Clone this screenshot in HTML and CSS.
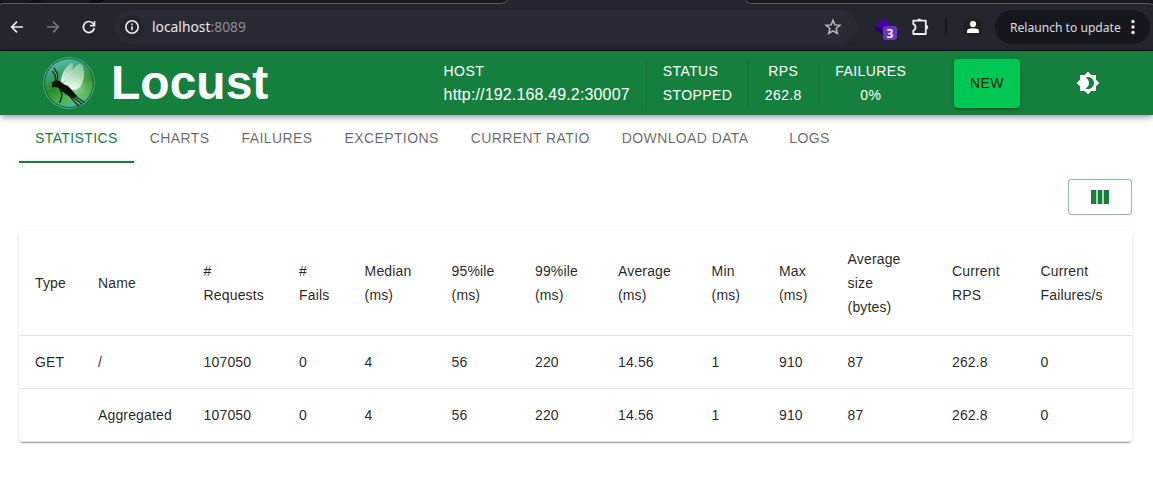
FILE: index.html
```html
<!DOCTYPE html>
<html lang="en">
<head>
<meta charset="utf-8">
<title>Locust</title>
<link rel="stylesheet" href="styles.css">
</head>
<body>
<div class="browser">
  <div class="tabstrip">
    <svg class="tabstrip-art" width="1153" height="5" viewBox="0 0 1153 5">
      <path d="M0 0H508Q505 3.5 500 3.5H0z" fill="#17181d"/>
      <path d="M745 0H1153V3.5H753Q748 3.5 745 0z" fill="#17181d"/>
      <path d="M27 3L34 0H43L40 3zM88 3L91 0H104L101 3z" fill="#0d0e11"/>
      <path d="M0 5Q1 3.5 4 3.5H500Q506 3.5 508 0M745.500 0Q747 3.500 753 3.500H1147Q1151 3.500 1153 5" fill="none" stroke="#5a5b5e"/>
    </svg>
  </div>
  <div class="toolbar">
    <svg class="nav-icon back" width="16" height="16" viewBox="0 0 16 16"><path d="M14 8H3M8 2.700L2.700 8L8 13.300" fill="none" stroke="#eeeeef" stroke-width="1.700"/></svg>
    <svg class="nav-icon forward" width="16" height="16" viewBox="0 0 16 16"><path d="M2 8H13M8 2.700L13.300 8L8 13.300" fill="none" stroke="#77787c" stroke-width="1.700"/></svg>
    <svg class="nav-icon reload" width="16" height="16" viewBox="0 0 16 16"><path d="M13.300 9A5.500 5.500 0 1 1 12.300 4.700L13.500 6" fill="none" stroke="#eeeeef" stroke-width="1.700"/><path d="M13.500 2V6.600H9" fill="none" stroke="#eeeeef" stroke-width="1.600"/></svg>
    <div class="omnibox">
      <span class="site-info"><svg width="16" height="16" viewBox="0 0 16 16"><circle cx="8" cy="8" r="6.200" fill="none" stroke="#eeeeef" stroke-width="1.600"/><path d="M8 7.200V11.200M8 4.500V6" stroke="#eeeeef" stroke-width="1.600"/></svg></span>
      <span class="url">localhost<span class="port">:8089</span></span>
      <svg class="star" width="18" height="18" viewBox="0 0 18 18"><path d="M9 2.300L10.900 6.900L15.900 7.300L12.100 10.500L13.300 15.400L9 12.800L4.700 15.400L5.900 10.500L2.100 7.300L7.100 6.900z" fill="none" stroke="#b9babd" stroke-width="1.500"/></svg>
    </div>
    <div class="extension">
      <svg width="18" height="18" viewBox="0 0 18 18"><path d="M0.500 9V12L8.500 17L16 12V9z" fill="#21016e"/><path d="M8.500 1L16.500 6.500L8.500 12L0.500 6.500z" fill="#4600ad"/></svg>
      <span class="badge">3</span>
    </div>
    <svg class="puzzle" width="20" height="20" viewBox="0 0 20 20"><path d="M3.300 3.700H15.800V17H3.300V13.500Q5.500 12.800 5.500 10.300Q5.500 7.900 3.300 7.200z" fill="none" stroke="#eeeeef" stroke-width="1.800" stroke-linejoin="round"/><path d="M7.300 3.500a2.100 2.100 0 0 1 4.200 0zM16 8a2.200 2.200 0 0 1 0 4.400z" fill="#eeeeef"/></svg>
    <span class="separator"></span>
    <span class="profile"><svg width="14" height="14" viewBox="0 0 14 14"><circle cx="7" cy="4" r="3.100" fill="#fff"/><path d="M1 13V11Q1 8.200 7 8.200T13 11V13z" fill="#fff"/></svg></span>
    <div class="relaunch"><span>Relaunch to update</span><svg width="4" height="16" viewBox="0 0 4 16" fill="#eeeeef"><circle cx="2" cy="2.500" r="1.700"/><circle cx="2" cy="8" r="1.700"/><circle cx="2" cy="13.500" r="1.700"/></svg></div>
  </div>
</div>

<header class="appbar">
  <div class="brand">
    <svg width="52" height="52" viewBox="0 0 52 52">
      <defs>
        <linearGradient id="sky" x1="0.200" y1="0" x2="0.500" y2="1">
          <stop offset="0" stop-color="#58c6c0"/><stop offset="0.350" stop-color="#3b9c68"/><stop offset="0.600" stop-color="#278f25"/><stop offset="0.820" stop-color="#48b04c"/><stop offset="1" stop-color="#43bea8"/>
        </linearGradient>
        <radialGradient id="glow" cx="0.630" cy="0.590" r="0.420"><stop offset="0" stop-color="#b4e9a8" stop-opacity="0.900"/><stop offset="1" stop-color="#65ba57" stop-opacity="0"/></radialGradient>
        <linearGradient id="wing" x1="0.700" y1="0" x2="0.300" y2="1"><stop offset="0" stop-color="#b5e5c5" stop-opacity="0.600"/><stop offset="1" stop-color="#fff" stop-opacity="0.900"/></linearGradient>
      </defs>
      <circle cx="26" cy="26" r="25.300" fill="url(#sky)" stroke="#5fae86" stroke-width="1"/>
      <circle cx="26" cy="26" r="24.400" fill="url(#glow)" stroke="#124c38" stroke-width="0.900"/>
      <path d="M18 25C18 15 25 7 29 6C33 8 26 18 20 26z" fill="url(#wing)"/>
      <path d="M20 28C24 18 31 8 37 7C43 9 42 25 36 31C31 34 24 33 20 28z" fill="url(#wing)"/>
      <path d="M9 30.500L8.800 26L12 23.500L16.500 24L20 27L25 29L30 34.500L34.500 39.500L29.500 41L23 37.500L17.500 33L15 30.500L12 30z" fill="#071109"/>
      <path d="M13 24L12 18L9 14M14.500 24V17L11 11M16.500 31L19 37L18 42L16.500 46M24 36L30 43L36 49.500M27 38L39 47M30 38L41 45" fill="none" stroke="#0a2110" stroke-width="1.200"/>
    </svg>
    <h1>Locust</h1>
  </div>
  <div class="status">
    <div class="metric host"><span>HOST</span><span class="address">http://192.168.49.2:30007</span></div>
    <div class="metric state"><span>STATUS</span><span>STOPPED</span></div>
    <div class="metric rps"><span>RPS</span><span>262.8</span></div>
    <div class="metric fails"><span>FAILURES</span><span>0%</span></div>
  </div>
  <button class="new">NEW</button>
  <svg class="theme" width="24" height="24" viewBox="0 0 24 24"><path fill="#fff" d="M20 8.690V4h-4.690L12 .69 8.690 4H4v4.690L.69 12 4 15.310V20h4.690L12 23.310 15.310 20H20v-4.690L23.310 12 20 8.690zM12 18c-.89 0-1.740-.2-2.500-.55C11.560 16.500 13 14.420 13 12s-1.440-4.500-3.500-5.450C10.260 6.200 11.110 6 12 6c3.310 0 6 2.690 6 6s-2.690 6-6 6z"/></svg>
</header>

<main class="content">
  <nav class="tabs">
    <a class="tab active">STATISTICS</a><a class="tab">CHARTS</a><a class="tab">FAILURES</a><a class="tab">EXCEPTIONS</a><a class="tab">CURRENT RATIO</a><a class="tab">DOWNLOAD DATA</a><a class="tab">LOGS</a>
  </nav>
  <div class="actions">
    <button class="columns"><svg width="24" height="24" viewBox="0 0 24 24"><path fill="#15803d" d="M3 5h5.330v14H3zM9.670 5h4.660v14H9.670zM15.670 5H21v14h-5.330z"/></svg></button>
  </div>
  <div class="paper">
    <table>
      <colgroup><col class="c-type"><col class="c-name"><col class="c-req"><col class="c-fail"><col class="c-med"><col class="c-pct"><col class="c-pct"><col class="c-avg"><col class="c-min"><col class="c-max"><col class="c-size"><col class="c-rps"><col class="c-fps"></colgroup>
      <thead><tr><th>Type</th><th>Name</th><th class="snug">#<br>Requests</th><th>#<br>Fails</th><th class="snug">Median<br>(ms)</th><th class="snug">95%ile<br>(ms)</th><th>99%ile<br>(ms)</th><th>Average<br>(ms)</th><th class="snug">Min<br>(ms)</th><th>Max<br>(ms)</th><th class="snug">Average<br>size<br>(bytes)</th><th>Current<br>RPS</th><th class="loose">Current<br>Failures/s</th></tr></thead>
      <tbody>
        <tr><td>GET</td><td>/</td><td class="snug">107050</td><td>0</td><td class="snug">4</td><td class="snug">56</td><td>220</td><td>14.56</td><td class="snug">1</td><td>910</td><td class="snug">87</td><td>262.8</td><td class="loose">0</td></tr>
        <tr><td></td><td>Aggregated</td><td class="snug">107050</td><td>0</td><td class="snug">4</td><td class="snug">56</td><td>220</td><td>14.56</td><td class="snug">1</td><td>910</td><td class="snug">87</td><td>262.8</td><td class="loose">0</td></tr>
      </tbody>
    </table>
  </div>
</main>
</body>
</html>
```

FILE: styles.css
```css
* { box-sizing: border-box; }
html, body { margin: 0; height: 500px; overflow: hidden; }
body { background: #fff; color: rgba(0,0,0,.87); font-family: "Liberation Sans", Arial, sans-serif; font-size: 14px; }
svg { display: block; flex: none; }
button { font: inherit; margin: 0; }

.browser { height: 51px; background: #23262f; border-bottom: 1px solid #08090b; font-family: "Noto Sans", sans-serif; }
.tabstrip { height: 5px; }
.toolbar { height: 45px; display: flex; align-items: center; padding: 0 3px 1px 9px; }
.forward { margin-left: 20px; }
.reload { margin-left: 20px; }
.omnibox { width: 742px; height: 34px; margin-left: 18px; border-radius: 17px; background: #282a36; display: flex; align-items: center; padding: 0 15px 0 5px; }
.site-info { width: 24px; height: 24px; border-radius: 12px; background: #23262f; display: grid; place-items: center; }
.url { margin-left: 8px; color: #e8e8ea; font-size: 13.85px; flex: 1; padding-bottom: 1px; }
.port { color: #8d8e94; }
.extension { position: relative; margin-left: 18px; width: 22px; height: 18px; }
.badge { position: absolute; left: 8px; top: 8px; width: 14px; height: 14px; border-radius: 3px; background: #6938b8; color: #fff; font-size: 12px; font-weight: 600; line-height: 15px; text-align: center; }
.puzzle { margin-left: 13px; }
.separator { width: 2px; height: 16px; background: #15171c; margin-left: 15px; }
.profile { width: 20px; height: 20px; border-radius: 10px; background: #1f2020; display: grid; place-items: center; margin-left: 16px; }
.relaunch { margin-left: 12px; width: 155px; height: 34px; border-radius: 17px; background: #16171c; color: #dedfe1; font-size: 12.1px; display: flex; align-items: center; justify-content: space-between; padding: 0 15px; white-space: nowrap; }

.appbar { position: relative; height: 64px; background: #15803d; color: #fff; display: flex; align-items: center; padding: 0 53px 0 43px; box-shadow: 0 2px 4px -1px rgba(0,0,0,.2), 0 4px 5px rgba(0,0,0,.14), 0 1px 10px rgba(0,0,0,.12); }
.brand { width: 384.6px; display: flex; align-items: center; gap: 16px; }
.brand h1 { margin: 0; font-size: 48px; line-height: 56px; font-weight: 700; }
.status { display: flex; height: 49px; }
.metric { display: flex; flex-direction: column; align-items: center; padding: 0 16px; line-height: 24px; letter-spacing: .4px; border-right: 1px solid rgba(0,0,0,.12); white-space: nowrap; }
.host { width: 219.2px; align-items: flex-start; }
.address { font-size: 16px; letter-spacing: .15px; }
.state { width: 102px; align-items: flex-start; }
.rps { width: 70px; }
.fails { width: 104px; border-right: 0; }
.new { width: 66px; height: 49px; margin-left: 31.2px; border: 0; border-radius: 4px; background: #00c853; color: rgba(0,0,0,.87); letter-spacing: .4px; box-shadow: 0 3px 1px -2px rgba(0,0,0,.2), 0 2px 2px rgba(0,0,0,.14), 0 1px 5px rgba(0,0,0,.12); }
.theme { margin-left: 56px; }

.content { padding: 0 21px 0 19px; }
.tabs { display: flex; height: 48px; }
.tab { min-width: 90px; padding: 14px 16px 0; line-height: 18px; letter-spacing: .4px; color: rgba(0,0,0,.6); text-align: center; white-space: nowrap; }
.active { color: #15803d; border-bottom: 2px solid #15803d; }
.actions { display: flex; justify-content: flex-end; padding: 16px 0; }
.columns { width: 64px; height: 36px; display: grid; place-items: center; background: #fff; border: 1px solid rgba(21,128,61,.5); border-radius: 4px; padding: 0; }
.paper { border-radius: 4px; height: 211px; box-shadow: 0 2px 1px -1px rgba(0,0,0,.2), 0 1px 1px rgba(0,0,0,.14), 0 1px 3px rgba(0,0,0,.12); }
table { width: 1113px; table-layout: fixed; border-collapse: separate; border-spacing: 0; }
th, td { padding: 0 0 0 16px; text-align: left; font-weight: 400; letter-spacing: .15px; line-height: 24px; border-bottom: 1px solid #e0e0e0; white-space: nowrap; }
th { height: 105px; }
td { height: 53px; }
.snug { padding-left: 15.6px; }
.loose { padding-left: 16.5px; }
.c-type { width: 63px; }
.c-name { width: 106px; }
.c-req { width: 95px; }
.c-fail { width: 66px; }
.c-med { width: 87px; }
.c-pct { width: 83px; }
.c-avg { width: 94px; }
.c-min { width: 67px; }
.c-max { width: 69px; }
.c-size { width: 104px; }
.c-rps { width: 88px; }
.c-fps { width: 108px; }
```
